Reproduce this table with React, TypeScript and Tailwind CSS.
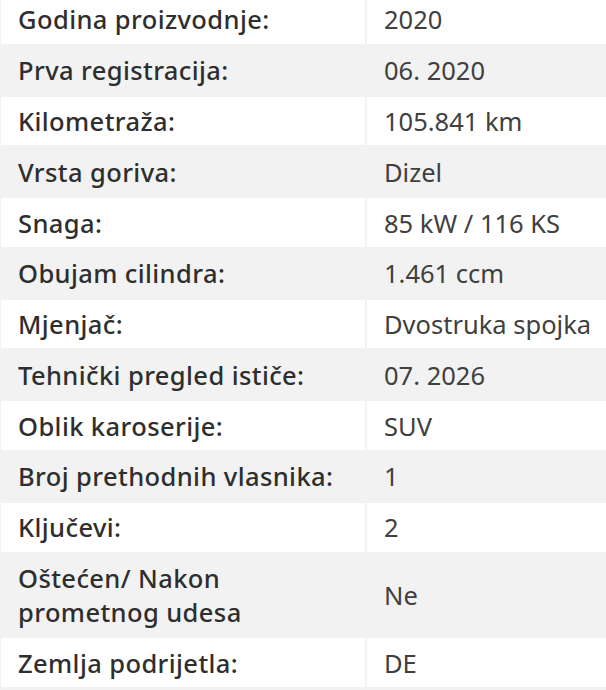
import React from "react";

const rows: [string, string][] = [
  ["Godina proizvodnje:", "2020"],
  ["Prva registracija:", "06. 2020"],
  ["Kilometraža:", "105.841 km"],
  ["Vrsta goriva:", "Dizel"],
  ["Snaga:", "85 kW / 116 KS"],
  ["Obujam cilindra:", "1.461 ccm"],
  ["Mjenjač:", "Dvostruka spojka"],
  ["Tehnički pregled ističe:", "07. 2026"],
  ["Oblik karoserije:", "SUV"],
  ["Broj prethodnih vlasnika:", "1"],
  ["Ključevi:", "2"],
  ["Oštećen/ Nakon prometnog udesa", "Ne"],
  ["Zemlja podrijetla:", "DE"],
];

export default function App() {
  return (
    <div
      className="w-[606px] h-[690px] overflow-hidden bg-[#f2f2f2]"
      style={{ fontFamily: '"Noto Sans", "Open Sans", sans-serif' }}
    >
      <div className="-mt-[5px] pl-[1px] grid grid-cols-[364px_1fr] gap-[2px] text-[25.5px] leading-[34px]">
        {rows.map(([label, value], i) => {
          const bg = i % 2 === 0 ? "bg-white" : "bg-[#f2f2f2]";
          return (
            <React.Fragment key={label}>
              <div
                className={`${bg} pl-[17px] pr-3 py-[7.4px] font-medium tracking-[0.4px] text-[#2e2e2e] flex items-center`}
              >
                <span className={i === 11 ? "w-[240px]" : ""}>{label}</span>
              </div>
              <div
                className={`${bg} pl-[17px] pr-2 py-[7.4px] text-[#404040] flex items-center whitespace-nowrap`}
              >
                {value}
              </div>
            </React.Fragment>
          );
        })}
      </div>
    </div>
  );
}
